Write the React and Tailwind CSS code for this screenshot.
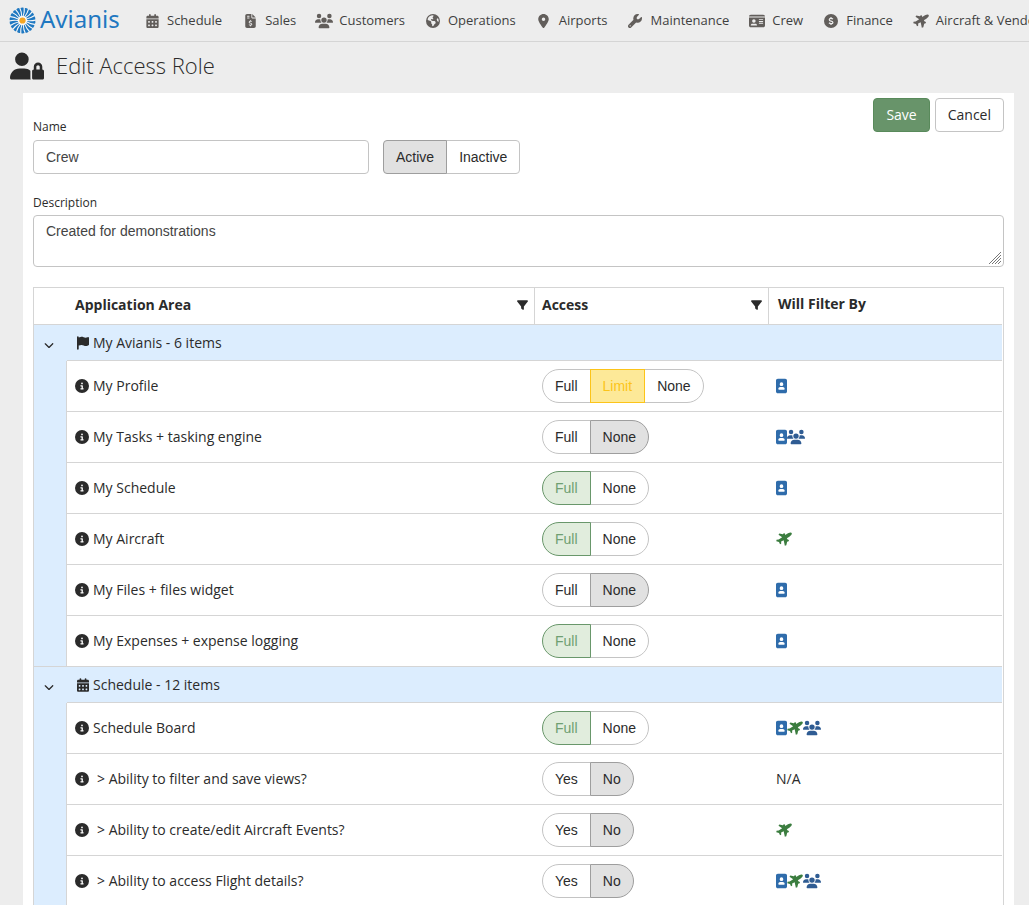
import { useState } from 'react'
import {
  FaCalendarDays,
  FaChevronDown,
  FaCircleInfo,
  FaEarthAmericas,
  FaFileInvoiceDollar,
  FaFilter,
  FaFlag,
  FaIdCard,
  FaImagePortrait,
  FaLocationDot,
  FaUserLock,
  FaUsers,
  FaWrench,
} from 'react-icons/fa6'

function PlaneIcon({ className }) {
  return (
    <svg viewBox="0 0 48 42" fill="currentColor" className={className} aria-hidden="true">
      <path d="M47.500 4C47.500 8 45 11 40 14L32.500 18.500L35 22.500L39 24L38 28L33.500 29L31 39.500L26.500 41L23 24.500L15.500 28.500L15.500 35L12 37L9 30L1 27.500L1.500 23.500L8 22.500L18.500 16L7.500 8.500L10 4.500L20.500 7L23.500 3.500L27 4.500L27.500 9L36 4C42 .5 46.500 .5 47.500 4z" />
    </svg>
  )
}

function DollarIcon({ className }) {
  return (
    <svg viewBox="0 0 16 16" className={className} aria-hidden="true">
      <circle cx="8" cy="8" r="8" fill="currentColor" />
      <path d="M10.200 5.900C9.600 5.200 8.900 5 8 5 6.800 5 6 5.600 6 6.500c0 2.100 4.200 1 4.200 3.100C10.200 10.500 9.300 11 8.100 11c-1 0-1.800-.3-2.400-1M8 3.500V5m0 6v1.500" fill="none" stroke="#ededed" strokeWidth="1.400" />
    </svg>
  )
}

const RAYS = Array.from({ length: 18 }, (_, i) => i * 20)

function Logo() {
  return (
    <svg viewBox="0 0 52 52" className="size-[27px]" aria-hidden="true">
      <circle cx="26" cy="26" r="24" fill="#f8f8f8" />
      {RAYS.map((angle) => (
        <path key={angle} d="M25.200 17Q25 8 22 1.800Q25 .2 28.200 1.400Q29 10 26.600 17z" fill="#1f78c1" transform={`rotate(${angle} 26 26)`} />
      ))}
      <circle cx="26" cy="26" r="6" fill="#f5a623" />
    </svg>
  )
}

const NAV = [
  { label: 'Schedule', Icon: FaCalendarDays, size: 'h-3.5 w-[13px]' },
  { label: 'Sales', Icon: FaFileInvoiceDollar, size: 'h-3.5 w-[11px]' },
  { label: 'Customers', Icon: FaUsers, size: 'h-4 w-[18px]' },
  { label: 'Operations', Icon: FaEarthAmericas, size: 'size-3.5' },
  { label: 'Airports', Icon: FaLocationDot, size: 'h-3.5 w-[11px]' },
  { label: 'Maintenance', Icon: FaWrench, size: 'size-3.5' },
  { label: 'Crew', Icon: FaIdCard, size: 'size-4' },
  { label: 'Finance', Icon: DollarIcon, size: 'size-3.5' },
  { label: 'Aircraft & Vendors', Icon: PlaneIcon, size: 'h-3.5 w-4' },
]

const GROUPS = [
  {
    title: 'My Avianis - 6 items',
    Icon: FaFlag,
    rows: [
      { name: 'My Profile', options: ['Full', 'Limit', 'None'], value: 'Limit', filters: ['person'] },
      { name: 'My Tasks + tasking engine', options: ['Full', 'None'], value: 'None', filters: ['person', 'group'] },
      { name: 'My Schedule', options: ['Full', 'None'], value: 'Full', filters: ['person'] },
      { name: 'My Aircraft', options: ['Full', 'None'], value: 'Full', filters: ['aircraft'] },
      { name: 'My Files + files widget', options: ['Full', 'None'], value: 'None', filters: ['person'] },
      { name: 'My Expenses + expense logging', options: ['Full', 'None'], value: 'Full', filters: ['person'] },
    ],
  },
  {
    title: 'Schedule - 12 items',
    Icon: FaCalendarDays,
    rows: [
      { name: 'Schedule Board', options: ['Full', 'None'], value: 'Full', filters: ['person', 'aircraft', 'group'] },
      { name: 'Ability to filter and save views?', sub: true, options: ['Yes', 'No'], value: 'No', filters: [] },
      { name: 'Ability to create/edit Aircraft Events?', sub: true, options: ['Yes', 'No'], value: 'No', filters: ['aircraft'] },
      { name: 'Ability to access Flight details?', sub: true, options: ['Yes', 'No'], value: 'No', filters: ['person', 'aircraft', 'group'] },
    ],
  },
]

const SELECTED = {
  Full: 'z-10 border-[#69976b] bg-[#e1eddd] text-[#6f9f72]',
  Yes: 'z-10 border-[#69976b] bg-[#e1eddd] text-[#6f9f72]',
  Limit: 'z-10 border-[#fcc419] bg-[#fde998] text-[#fcc419]',
}
const SELECTED_GREY = 'z-10 border-[#9e9e9e] bg-[#e1e1e1] text-[#2b2b2b]'

function Toggle({ label, options, initial, pill }) {
  const [value, setValue] = useState(initial)
  const ends = pill ? 'first:rounded-l-full last:rounded-r-full' : 'first:rounded-l last:rounded-r'

  return (
    <div role="group" aria-label={label} className="flex">
      {options.map((option) => (
        <button
          key={option}
          type="button"
          aria-pressed={value === option}
          onClick={() => setValue(option)}
          className={`relative -ml-px h-[34px] border px-3 font-['Liberation_Sans',sans-serif] text-sm first:ml-0 ${ends} ${
            value === option ? SELECTED[option] || SELECTED_GREY : 'border-[#c4c4c4] bg-white text-[#2b2b2b]'
          }`}
        >
          {option}
        </button>
      ))}
    </div>
  )
}

function FilterIcons({ filters }) {
  if (!filters.length) return 'N/A'
  return (
    <div className="flex items-center">
      {filters.includes('person') && <FaImagePortrait className="h-4 w-[11px] text-[#2f6cab]" />}
      {filters.includes('aircraft') && <PlaneIcon className="h-3.5 w-4 text-[#3b7d3f]" />}
      {filters.includes('group') && <FaUsers className="h-4 w-[18px] text-[#2f5c93]" />}
    </div>
  )
}

function Group({ title, Icon, rows }) {
  return (
    <tbody>
      <tr className="h-9 bg-[#dcedfe]">
        <td className="border-b border-[#dcedfe]">
          <button type="button" aria-label="Collapse group" className="mt-1 flex w-full justify-center pr-1">
            <FaChevronDown className="size-2.5" />
          </button>
        </td>
        <td colSpan={3} className="border-b border-[#d5d5d5] pl-2">
          <div className="flex items-center gap-1 pl-0.5">
            <Icon className="h-3.5 w-3" />
            {title}
          </div>
        </td>
      </tr>
      {rows.map((row, i) => (
        <tr key={row.name} className="h-[51px]">
          <td className={`border-r border-[#d5d5d5] bg-[#dcedfe] ${i === rows.length - 1 ? 'border-b' : ''}`} />
          <td className="border-b border-[#d5d5d5] pl-2">
            <div className="flex items-center gap-1">
              <FaCircleInfo className="size-3.5" />
              <span className={row.sub ? 'pl-1' : ''}>
                {row.sub && '> '}
                {row.name}
              </span>
            </div>
          </td>
          <td className="border-b border-[#d5d5d5] pl-[7px]">
            <Toggle label={row.name} options={row.options} initial={row.value} pill />
          </td>
          <td className="border-b border-[#d5d5d5] pl-[7px]">
            <FilterIcons filters={row.filters} />
          </td>
        </tr>
      ))}
    </tbody>
  )
}

function HeaderCell({ title }) {
  return (
    <div className="flex items-center justify-between pr-1.5">
      {title}
      <button type="button" aria-label={`Filter ${title}`}>
        <FaFilter className="h-3 w-[11px]" />
      </button>
    </div>
  )
}

export default function App() {
  return (
    <div className="h-screen overflow-hidden bg-[#ededed] font-['Open_Sans','Noto_Sans',sans-serif] text-sm text-[#2b2b2b]">
      <header className="flex h-[42px] items-center overflow-hidden border-b border-[#d5d5d5] pl-[9px]">
        <a href="#" className="flex w-[134px] shrink-0 items-center gap-1 font-['Noto_Sans',sans-serif] text-2xl leading-6 text-[#1f78c1]">
          <Logo />
          <span className="pb-1">Avianis</span>
        </a>
        <nav className="flex gap-[19px] text-[13px] text-[#3f3f3f]">
          {NAV.map(({ label, Icon, size }) => (
            <a key={label} href="#" className="flex items-center gap-1.5 whitespace-nowrap">
              <span className="flex w-[18px] justify-center text-[#625e5b]">
                <Icon className={size} />
              </span>
              {label}
            </a>
          ))}
        </nav>
      </header>

      <div className="flex h-[51px] items-center gap-3 pb-1 pl-2.5">
        <FaUserLock className="h-7 w-[34px]" />
        <h1 className="text-[22px] font-light">Edit Access Role</h1>
      </div>

      <main className="mr-[15px] ml-[23px] bg-white px-2.5 pt-[5px]">
        <div className="flex items-start justify-between">
          <div className="flex items-end gap-3.5 pt-[18px]">
            <div>
              <label htmlFor="name" className="block h-6 text-xs leading-[22px]">Name</label>
              <input
                id="name"
                defaultValue="Crew"
                className="block h-[34px] w-[336px] rounded border border-[#c4c4c4] px-3 font-['Liberation_Sans',sans-serif] text-sm text-[#444]"
              />
            </div>
            <Toggle label="Status" options={['Active', 'Inactive']} initial="Active" />
          </div>
          <div className="flex gap-[5px]">
            <button type="button" className="h-[34px] rounded border border-[#598a5b] bg-[#68946a] px-3 text-white">Save</button>
            <button type="button" className="h-[34px] rounded border border-[#c4c4c4] px-3">Cancel</button>
          </div>
        </div>

        <label htmlFor="description" className="mt-[18px] block h-[23px] text-xs leading-[22px]">Description</label>
        <div className="relative">
          <textarea
            id="description"
            defaultValue="Created for demonstrations"
            className="block h-[52px] w-full resize-none rounded border border-[#c4c4c4] px-3 py-[5px] font-['Liberation_Sans',sans-serif] text-sm text-[#444]"
          />
          {/* resize grip */}
          <svg viewBox="0 0 14 14" className="pointer-events-none absolute right-0.5 bottom-0.5 size-3.5" aria-hidden="true">
            <path d="M1 13L13 1M4 13L13 4M7 13L13 7M10 13L13 10" stroke="#777" fill="none" />
          </svg>
        </div>

        <table className="mt-5 w-full table-fixed border-separate border-spacing-0 border border-[#d5d5d5] pr-px">
          <colgroup>
            <col className="w-[33px]" />
            <col className="w-[468px]" />
            <col className="w-[234px]" />
            <col />
          </colgroup>
          <thead>
            <tr className="h-[37px] text-left">
              <th className="border-b border-[#d5d5d5]" />
              <th className="border-r border-b border-[#d5d5d5] pb-0.5 pl-2"><HeaderCell title="Application Area" /></th>
              <th className="border-r border-b border-[#d5d5d5] pb-0.5 pl-[7px]"><HeaderCell title="Access" /></th>
              <th className="border-b border-[#d5d5d5] pb-1 pl-[9px]">Will Filter By</th>
            </tr>
          </thead>
          {GROUPS.map((group) => (
            <Group key={group.title} {...group} />
          ))}
        </table>
      </main>
    </div>
  )
}
